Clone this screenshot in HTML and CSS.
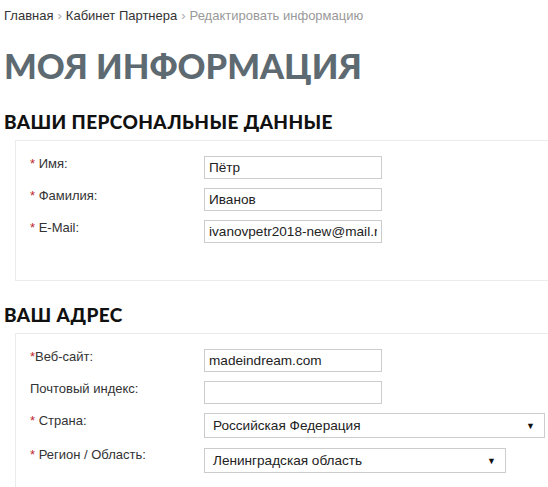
FILE: index.html
```html
<!DOCTYPE html>
<html lang="ru">
<head>
<meta charset="utf-8">
<title>Моя информация</title>
<link rel="stylesheet" href="styles.css">
</head>
<body>
<div class="page">
  <nav class="crumbs">
    <a class="crumb">Главная</a><span class="sep">›</span><a class="crumb">Кабинет Партнера</a><span class="sep">›</span><span class="crumb current">Редактировать информацию</span>
  </nav>
  <h1 class="title">Моя информация</h1>

  <h2 class="section-title">Ваши персональные данные</h2>
  <div class="box box-personal">
    <div class="form-grid">
      <label class="lbl"><span class="req">*</span> Имя:</label>
      <input class="field" type="text" value="Пётр">
      <label class="lbl"><span class="req">*</span> Фамилия:</label>
      <input class="field" type="text" value="Иванов">
      <label class="lbl"><span class="req">*</span> E-Mail:</label>
      <input class="field" type="text" value="ivanovpetr2018-new@mail.ru">
    </div>
  </div>

  <h2 class="section-title">Ваш адрес</h2>
  <div class="box box-address">
    <div class="form-grid">
      <label class="lbl"><span class="req">*</span>Веб-сайт:</label>
      <input class="field" type="text" value="madeindream.com">
      <label class="lbl">Почтовый индекс:</label>
      <input class="field" type="text" value="">
      <label class="lbl"><span class="req">*</span> Страна:</label>
      <div class="select select-wide"><span class="select-text">Российская Федерация</span><span class="arrow">▼</span></div>
      <label class="lbl"><span class="req">*</span> Регион / Область:</label>
      <div class="select select-mid"><span class="select-text">Ленинградская область</span><span class="arrow">▼</span></div>
    </div>
  </div>
</div>
</body>
</html>
```

FILE: styles.css
```css
html, body {
  margin: 0;
  padding: 0;
  background: #ffffff;
  overflow: hidden;
}

.page {
  padding: 0 0 0 4px;
  font-family: "Liberation Sans", Arial, sans-serif;
  color: #333333;
}

.crumbs {
  font-size: 13px;
  line-height: 16px;
  padding-top: 8px;
  color: #333333;
  white-space: nowrap;
}

.crumb {
  color: #333333;
  text-decoration: none;
}

.crumb.current {
  color: #999999;
}

.sep {
  color: #aaaaaa;
  padding: 0 4px;
}

.title {
  margin: 22px 0 0 0;
  font-family: "Lato", "Open Sans", sans-serif;
  font-weight: 900;
  font-size: 34.5px;
  line-height: 40px;
  text-transform: uppercase;
  letter-spacing: 0;
  color: #5e6a71;
}

.section-title {
  margin: 25px 0 0 0;
  font-family: "Lato", "Open Sans", sans-serif;
  font-weight: 900;
  font-size: 19px;
  line-height: 22px;
  text-transform: uppercase;
  color: #111111;
  letter-spacing: 0.4px;
}

.box {
  margin: 7px -20px 0 11px;
  border: 1px solid #ebebeb;
  padding: 15px 0 0 14px;
}

.box-personal {
  height: 124px;
}

.box-address {
  height: 200px;
}

.section-title + .box-address {
  margin-top: 7px;
}

.box-personal + .section-title {
  margin-top: 23px;
}

.form-grid {
  display: grid;
  grid-template-columns: 174px auto;
  row-gap: 9px;
  align-items: start;
}

.lbl {
  font-size: 13px;
  line-height: 16px;
  color: #333333;
}

.req {
  color: #c0272d;
}

.field {
  box-sizing: border-box;
  width: 178px;
  height: 23px;
  margin: 0;
  padding: 0 4px;
  border: 1px solid #cccccc;
  border-radius: 0;
  font-family: "Liberation Sans", Arial, sans-serif;
  font-size: 13.6px;
  color: #222222;
  background: #ffffff;
  outline: none;
}

.select {
  box-sizing: border-box;
  position: relative;
  height: 25px;
  border: 1px solid #cccccc;
  display: flex;
  align-items: center;
  padding: 0 8px;
  font-size: 13.6px;
  color: #222222;
}

.select-wide {
  width: 341px;
}

.select-mid {
  width: 302px;
  margin-top: 1px;
}

.select-text {
  white-space: nowrap;
}

.arrow {
  position: absolute;
  right: 9px;
  top: 6px;
  font-size: 9px;
  line-height: 12px;
  color: #111111;
}
```
